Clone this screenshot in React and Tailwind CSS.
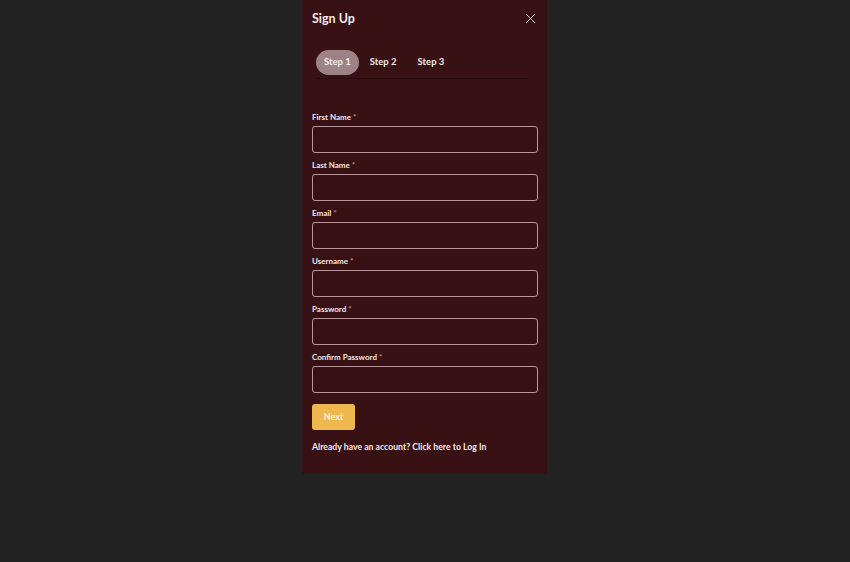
import { X } from "lucide-react";

const fields = [
  "First Name",
  "Last Name",
  "Email",
  "Username",
  "Password",
  "Confirm Password",
];

function Field({ label }) {
  return (
    <div className="flex flex-col">
      <label className="text-[8px] leading-[12px] font-bold text-[#f3e6e7]">
        {label} <span className="text-[#c9868d]">*</span>
      </label>
      <input
        type="text"
        className="mt-[3px] h-[27px] w-full rounded-[3px] border border-[#b9949a] bg-transparent px-2 text-[10px] text-white outline-none"
      />
    </div>
  );
}

export default function App() {
  return (
    <div className="h-[562px] w-[850px] overflow-hidden bg-[#222222] font-['Lato','Liberation_Sans',sans-serif]">
      <div className="ml-[302px] flex h-[474px] w-[245px] flex-col bg-[#381115] pl-[10px] pr-[9px] pt-[10px]">
        <div className="flex h-[16px] items-center justify-between">
          <h2 className="pt-[1px] text-[12.5px] leading-[16px] font-bold text-[#f5eaea]">
            Sign Up
          </h2>
          <button className="-mr-[1px] text-[#e9dcdc]">
            <X size={17} strokeWidth={1.3} />
          </button>
        </div>

        <div className="ml-[4px] mr-[9px] mt-[24px] flex gap-[3px] border-b border-[#2a0b0e] pb-[3px]">
          <button className="h-[25px] rounded-full bg-[#9d8386] px-[8px] text-[9.5px] font-bold text-[#f6eeee]">
            Step 1
          </button>
          <button className="h-[25px] rounded-full px-[8px] text-[9.5px] font-bold text-[#f3e9e9]">
            Step 2
          </button>
          <button className="h-[25px] rounded-full px-[10px] text-[9.5px] font-bold text-[#f3e9e9]">
            Step 3
          </button>
        </div>

        <form className="mt-[32px] flex flex-col gap-[6px]">
          {fields.map((f) => (
            <Field key={f} label={f} />
          ))}
          <div className="mt-[3px]">
            <button
              type="button"
              className="h-[26px] w-[43px] rounded-[3px] bg-[#efb84f] text-[9px] font-bold text-[#fdf1dc]"
            >
              Next
            </button>
          </div>
        </form>

        <p className="mt-[11px] text-[8.7px] leading-[12px] font-bold text-[#f3e7e8]">
          Already have an account? Click here to Log In
        </p>
      </div>
    </div>
  );
}
